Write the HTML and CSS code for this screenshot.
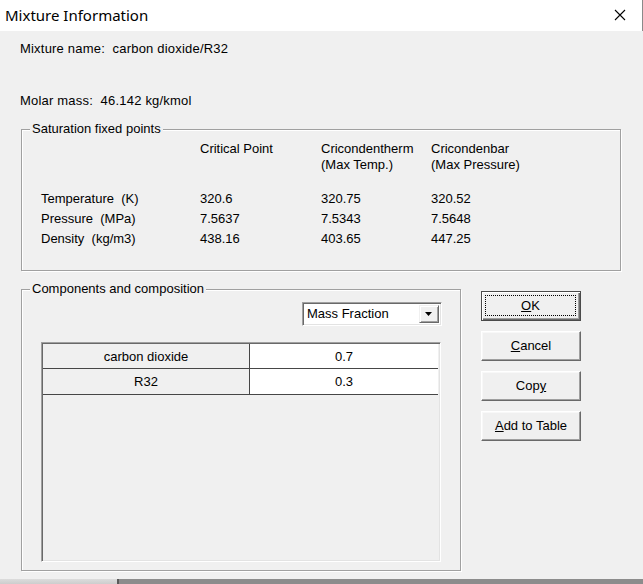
FILE: index.html
```html
<!DOCTYPE html>
<html>
<head>
<meta charset="utf-8">
<link rel="stylesheet" href="styles.css">
</head>
<body>
<div class="window">
  <div class="titlebar">
    <span class="title">Mixture Information</span>
    <svg class="close" width="12" height="12" viewBox="0 0 12 12"><path d="M1 1 L11 11 M11 1 L1 11" stroke="#000" stroke-width="1.1" fill="none"/></svg>
  </div>
  <div class="content">
    <div class="line name">Mixture name:  carbon dioxide/R32</div>
    <div class="line molar">Molar mass:  46.142 kg/kmol</div>
    <div class="group sat">
      <div class="legend">Saturation fixed points</div>
      <div class="satgrid">
        <div class="hdr"></div>
        <div class="hdr">Critical Point</div>
        <div class="hdr">Cricondentherm<br>(Max Temp.)</div>
        <div class="hdr">Cricondenbar<br>(Max Pressure)</div>
        <div>Temperature  (K)</div><div>320.6</div><div>320.75</div><div>320.52</div>
        <div>Pressure  (MPa)</div><div>7.5637</div><div>7.5343</div><div>7.5648</div>
        <div>Density  (kg/m3)</div><div>438.16</div><div>403.65</div><div>447.25</div>
      </div>
    </div>
    <div class="lower">
      <div class="group comp">
        <div class="legend">Components and composition</div>
        <div class="select">
          <span class="seltext">Mass Fraction</span>
          <span class="selbtn"><svg width="8" height="5" viewBox="0 0 8 5"><path d="M0 0 H7 L3.5 4 Z" fill="#000"/></svg></span>
        </div>
        <div class="table">
          <div class="row"><div class="c1">carbon dioxide</div><div class="c2">0.7</div></div>
          <div class="row"><div class="c1">R32</div><div class="c2">0.3</div></div>
        </div>
      </div>
      <div class="buttons">
        <div class="btn default"><div class="focus"><u>O</u>K</div></div>
        <div class="btn"><u>C</u>ancel</div>
        <div class="btn">Cop<u>y</u></div>
        <div class="btn"><u>A</u>dd to Table</div>
      </div>
    </div>
  </div>
</div>
<div class="strip"><div class="shade"></div><div class="edge"></div><div class="rest"></div></div>
</body>
</html>
```
FILE: styles.css
```css
html, body {
  margin: 0;
  padding: 0;
}
body {
  width: 643px;
  height: 584px;
  overflow: hidden;
  background: #8c8c8c;
  font-family: "Liberation Sans", Arial, sans-serif;
  font-size: 13px;
  color: #000;
}
.window {
  height: 579px;
  background: #f0f0f0;
  display: flex;
  flex-direction: column;
}
.titlebar {
  height: 31px;
  flex: none;
  background: #fff;
  display: flex;
  align-items: center;
  justify-content: space-between;
  padding-left: 5px;
  box-sizing: border-box;
  border-right: 1px solid #8a8a8a;
}
.title {
  font-family: "Noto Sans", "Liberation Sans", sans-serif;
  font-size: 15px;
  color: #000;
  margin-top: -2px;
}
.close {
  margin-right: 16px;
  margin-top: -2px;
}
.content {
  padding-top: 10px;
  display: flex;
  flex-direction: column;
}
.line {
  line-height: 16px;
  padding-left: 20px;
  white-space: pre;
  letter-spacing: 0.2px;
}
.molar {
  margin-top: 36px;
}
.group {
  box-sizing: border-box;
  border: 1px solid #a0a0a0;
  box-shadow: 1px 1px 0 #fff, inset 1px 1px 0 #fff;
  display: flex;
  flex-direction: column;
}
.legend {
  align-self: flex-start;
  margin-top: -9px;
  margin-left: 8px;
  padding: 0 2px;
  line-height: 16px;
  background: #f0f0f0;
}
.sat {
  margin-top: 20px;
  margin-left: 21px;
  width: 600px;
  height: 142px;
}
.satgrid {
  margin-top: 4px;
  padding-left: 19px;
  display: grid;
  grid-template-columns: 159px 121px 110px 1fr;
  line-height: 20px;
  white-space: pre;
}
.satgrid .hdr {
  line-height: 16px;
  padding-bottom: 16px;
}
.lower {
  margin-top: 18px;
  display: flex;
  align-items: flex-start;
}
.comp {
  margin-left: 21px;
  width: 440px;
  height: 282px;
}
.select {
  align-self: flex-end;
  margin-top: 5px;
  margin-right: 18px;
  width: 140px;
  height: 24px;
  box-sizing: border-box;
  background: #fff;
  border: 1px solid;
  border-color: #a0a0a0 #fff #fff #a0a0a0;
  box-shadow: inset 1px 1px 0 #696969, inset -1px -1px 0 #e3e3e3;
  display: flex;
  align-items: center;
  justify-content: space-between;
  padding: 2px 2px 2px 4px;
}
.seltext {
  line-height: 16px;
}
.selbtn {
  width: 20px;
  height: 18px;
  box-sizing: border-box;
  background: #f0f0f0;
  border: 1px solid;
  border-color: #f0f0f0 #696969 #696969 #f0f0f0;
  box-shadow: inset 1px 1px 0 #fff, inset -1px -1px 0 #a0a0a0;
  display: flex;
  align-items: center;
  justify-content: center;
}
.table {
  margin-top: 16px;
  margin-left: 19px;
  width: 400px;
  height: 220px;
  box-sizing: border-box;
  border: 1px solid;
  border-color: #a0a0a0 #fff #fff #a0a0a0;
  box-shadow: inset 1px 1px 0 #696969, inset -1px -1px 0 #e3e3e3;
  padding: 1px 1px 1px 1px;
  display: flex;
  flex-direction: column;
}
.row {
  display: flex;
  height: 25px;
  border-bottom: 1px solid #464646;
  margin-right: 1px;
}
.row:first-child {
  height: 24px;
}
.c1 {
  width: 206px;
  border-right: 1px solid #464646;
  background: #f0f0f0;
  display: flex;
  align-items: center;
  justify-content: center;
}
.c2 {
  flex: 1;
  background: #fff;
  display: flex;
  align-items: center;
  justify-content: center;
}
.buttons {
  margin-left: 20px;
  margin-top: 2px;
  width: 100px;
  display: flex;
  flex-direction: column;
  gap: 10px;
}
.btn {
  height: 30px;
  box-sizing: border-box;
  background: #f0f0f0;
  border: 1px solid;
  border-color: #fff #696969 #696969 #fff;
  box-shadow: inset -1px -1px 0 #a0a0a0, inset 1px 1px 0 #f8f8f8;
  display: flex;
  align-items: center;
  justify-content: center;
  line-height: 16px;
}
.btn.default {
  border-color: #4a4a4a;
  box-shadow: inset 1px 1px 0 #fff, inset -1px -1px 0 #696969, inset -2px -2px 0 #a0a0a0;
  align-items: stretch;
  justify-content: stretch;
  padding: 3px 4px 4px 3px;
}
.focus {
  flex: 1;
  border: 1px dotted #000;
  display: flex;
  align-items: center;
  justify-content: center;
}
u {
  text-underline-offset: 1px;
}
.strip {
  height: 5px;
  display: flex;
}
.shade {
  width: 117px;
  background: linear-gradient(#dcdcdc, #cdcdcd);
}
.edge {
  width: 2px;
  background: #5a5a5a;
}
.rest {
  flex: 1;
  background: #8c8c8c;
}
```
